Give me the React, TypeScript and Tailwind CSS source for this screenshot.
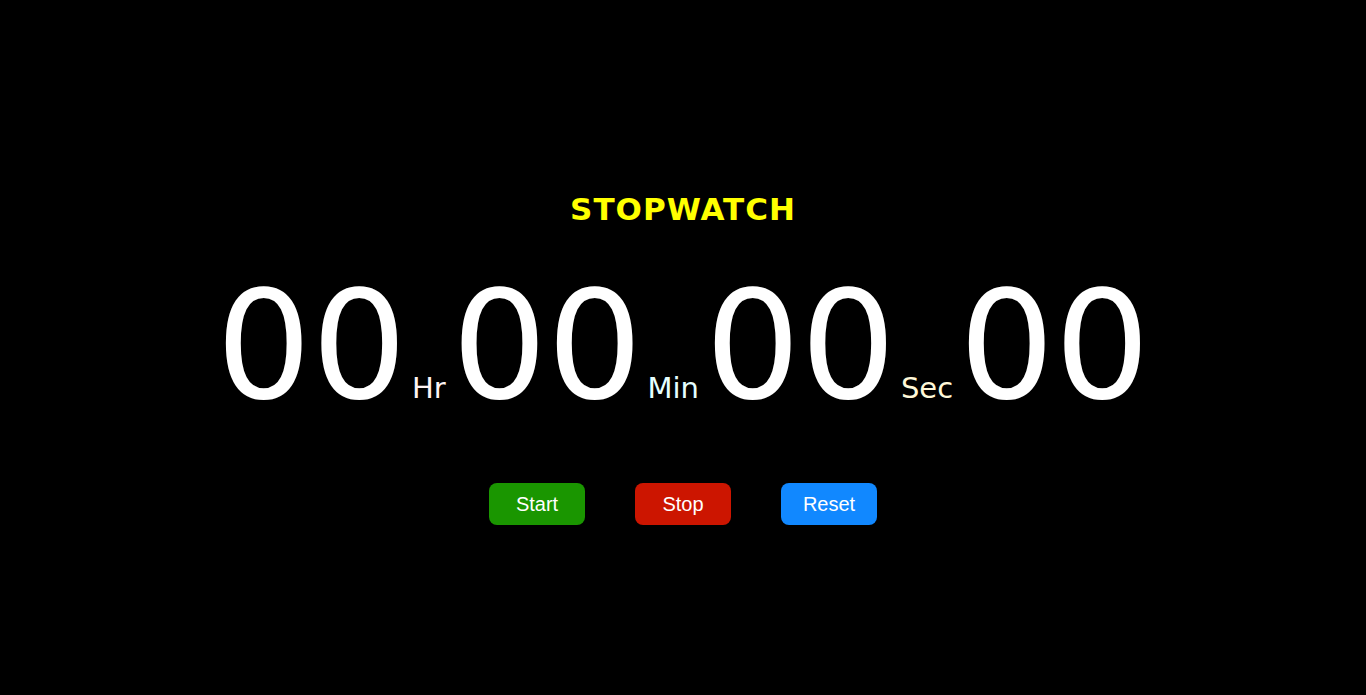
import { useEffect, useRef, useState } from 'react';

const pad = (n: number) => String(n).padStart(2, '0');

const Stopwatch = () => {
  const [ticks, setTicks] = useState(0); // hundredths of a second
  const [running, setRunning] = useState(false);
  const timer = useRef<number | null>(null);

  useEffect(() => {
    if (!running) return;
    timer.current = window.setInterval(() => setTicks((t) => t + 1), 10);
    return () => {
      if (timer.current) window.clearInterval(timer.current);
    };
  }, [running]);

  const hr = Math.floor(ticks / 360000);
  const min = Math.floor(ticks / 6000) % 60;
  const sec = Math.floor(ticks / 100) % 60;
  const cs = ticks % 100;

  return (
    <div className="min-h-screen bg-black flex flex-col items-center pt-[189px]">
      <h1 className="text-[31px] leading-[40px] tracking-[1px] font-bold text-[#ffff00] font-['DejaVu_Sans',Verdana,sans-serif]">
        STOPWATCH
      </h1>

      <div className="mt-[42px] flex items-baseline text-white font-['DejaVu_Sans',Verdana,sans-serif]">
        <span className="text-[150px] leading-[150px]">{pad(hr)}</span>
        <span className="text-[29px] ml-[5px] mr-[6px] text-[#fff4f4]">Hr</span>
        <span className="text-[150px] leading-[150px]">{pad(min)}</span>
        <span className="text-[29px] ml-[5px] mr-[6px] text-[#e6ffff]">Min</span>
        <span className="text-[150px] leading-[150px]">{pad(sec)}</span>
        <span className="text-[29px] ml-[5px] mr-[6px] text-[#fff8d8]">Sec</span>
        <span className="text-[150px] leading-[150px]">{pad(cs)}</span>
      </div>

      <div className="mt-[62px] flex gap-[50px] font-['Liberation_Sans',Arial,sans-serif] text-[20px] text-white">
        <button
          className="w-[96px] h-[42px] rounded-lg bg-[#1a9600]"
          onClick={() => setRunning(true)}
        >
          Start
        </button>
        <button
          className="w-[96px] h-[42px] rounded-lg bg-[#cc1500]"
          onClick={() => setRunning(false)}
        >
          Stop
        </button>
        <button
          className="w-[96px] h-[42px] rounded-lg bg-[#1188ff]"
          onClick={() => {
            setRunning(false);
            setTicks(0);
          }}
        >
          Reset
        </button>
      </div>
    </div>
  );
};

export default function App() {
  return <Stopwatch />;
}
